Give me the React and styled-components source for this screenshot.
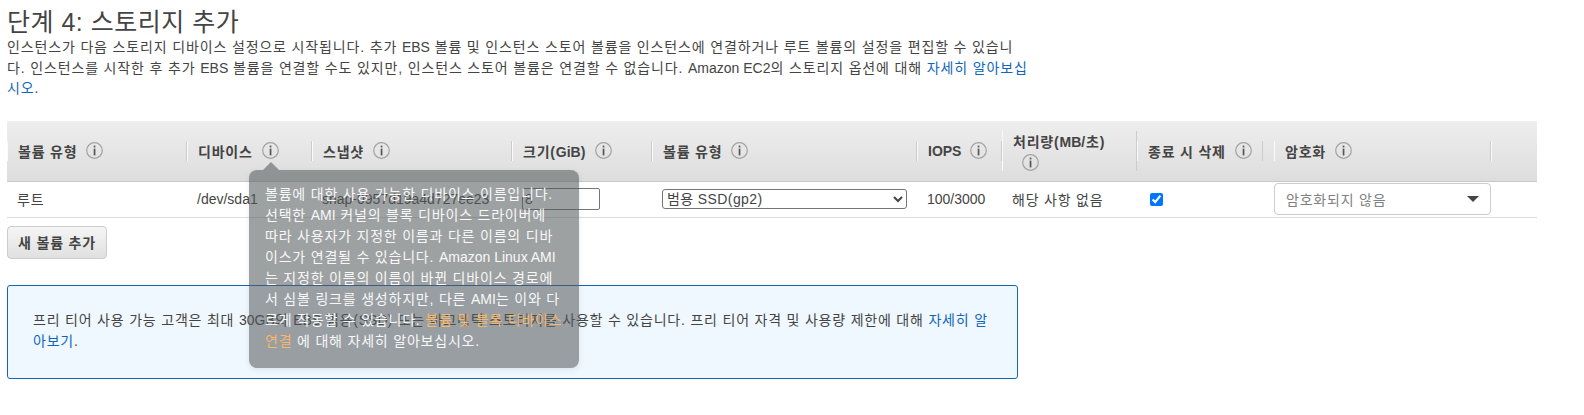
import React from "react";
import styled, { createGlobalStyle } from "styled-components";

const FONT = `"Liberation Sans", "Noto Sans CJK KR", sans-serif`;

const Global = createGlobalStyle`
  body {
    margin: 0;
    background: #fff;
    color: #444;
    font-family: ${FONT};
    font-size: 14px;
    letter-spacing: 0.8px;
  }
`;

const Page = styled.div`
  position: relative;
  width: 1584px;
  height: 415px;
  overflow: hidden;
  padding: 8px 0 0 7px;
  box-sizing: border-box;
`;

// latin runs keep their natural width, only the hangul is spaced out
const Lat = styled.span`
  letter-spacing: 0;
`;

const Title = styled.h1`
  margin: 0;
  font-size: 25px;
  font-weight: 400;
  line-height: 28px;
  letter-spacing: 0.5px;
  color: #444;
`;

const Intro = styled.p`
  margin: 1px 0 0;
  width: 1022px;
  line-height: 20.5px;
  letter-spacing: 0.85px;
  word-break: break-all;
`;

const Link = styled.a`
  color: #1166bb;
  text-decoration: none;
`;

const Table = styled.div`
  margin-top: 22px;
  width: 1530px;
`;

const COLUMNS = "180px 125px 200px 140px 265px 85px 135px 126px 228px 46px";

const HeadRow = styled.div`
  display: grid;
  grid-template-columns: ${COLUMNS};
  height: 61px;
  align-items: center;
  background: linear-gradient(#eee, #ddd);
  border-bottom: 1px solid #c8c8c8;
  box-sizing: border-box;
`;

const HeadCell = styled.div`
  display: flex;
  flex-direction: ${(p) => (p.$stack ? "column" : "row")};
  align-items: ${(p) => (p.$stack ? "flex-start" : "center")};
  gap: ${(p) => (p.$stack ? "3px" : "9px")};
  min-height: 20px;
  margin-left: ${(p) => (p.$inset ? "11px" : "0")};
  padding: 0 10px;
  font-weight: 700;
  color: #444;
  border-left: 1px solid #fafafa;
  border-right: ${(p) => (p.$plain ? "none" : "1px solid #ccc")};
  box-sizing: border-box;
  white-space: nowrap;
`;

const StackedIcon = styled.span`
  display: block;
  height: 17px;
  margin-left: 9px;
`;

const BodyRow = styled.div`
  display: grid;
  grid-template-columns: ${COLUMNS};
  height: 36px;
  align-items: center;
  border-bottom: 1px solid #ddd;
  box-sizing: border-box;
`;

const BodyCell = styled.div`
  padding-left: 10px;
  white-space: nowrap;
`;

const SizeInput = styled.input`
  display: block;
  width: 78px;
  height: 22px;
  padding: 0 2px;
  border: 1px solid #767676;
  border-radius: 2px;
  font: 14px ${FONT};
  color: #444;
  box-sizing: border-box;
`;

const TypeSelect = styled.select`
  display: block;
  width: 245px;
  height: 20px;
  border: 1px solid #767676;
  border-radius: 3px;
  background: #fff;
  font: 14px ${FONT};
  letter-spacing: 0.4px;
  color: #444;
`;

const DeleteCheck = styled.input`
  display: block;
  width: 13px;
  height: 13px;
  margin: 0 0 0 3px;
`;

const FakeSelect = styled.div`
  display: flex;
  align-items: center;
  justify-content: space-between;
  width: 217px;
  height: 32px;
  margin-left: 1px;
  padding: 0 11px;
  background: #fff;
  border: 1px solid #ccc;
  border-radius: 4px;
  color: #808080;
  box-sizing: border-box;
`;

const Caret = styled.span`
  width: 0;
  height: 0;
  border-left: 6px solid transparent;
  border-right: 6px solid transparent;
  border-top: 6px solid #444;
`;

const AddButton = styled.button`
  display: block;
  margin-top: 8px;
  width: 100px;
  height: 33px;
  padding: 0;
  background: linear-gradient(#f5f5f5, #e0e0e0);
  border: 1px solid #ccc;
  border-radius: 4px;
  font: 700 14px ${FONT};
  letter-spacing: 0.8px;
  color: #444;
`;

const Notice = styled.div`
  margin-top: 26px;
  width: 1011px;
  height: 94px;
  padding: 24px 25px;
  background: #f0f8ff;
  border: 1px solid #1166bb;
  border-radius: 3px;
  line-height: 21px;
  word-break: break-all;
  box-sizing: border-box;
`;

const Tip = styled.div`
  position: absolute;
  left: 249px;
  top: 170px;
  width: 330px;
  height: 198px;
  padding: 14px 16px;
  background: rgba(85, 90, 92, 0.57);
  border-radius: 8px;
  color: #f8f8f8;
  line-height: 21px;
  word-break: break-all;
  box-sizing: border-box;
  box-shadow: 0 2px 6px rgba(0, 0, 0, 0.08);

  &::before {
    content: "";
    position: absolute;
    left: 14px;
    top: -8px;
    border-left: 8px solid transparent;
    border-right: 8px solid transparent;
    border-bottom: 8px solid rgba(85, 90, 92, 0.57);
  }
`;

const TipLink = styled.a`
  color: #f6b76b;
  text-decoration: none;
`;

function InfoIcon() {
  return (
    <svg width="17" height="17" viewBox="0 0 17 17" style={{ flex: "none" }}>
      <circle cx="8.5" cy="8.5" r="7.8" fill="none" stroke="#a3a3a3" strokeWidth="1.2" />
      <rect x="7.7" y="3.6" width="1.7" height="1.8" fill="#555" />
      <rect x="7.7" y="6.6" width="1.7" height="6.8" fill="#555" />
    </svg>
  );
}

export default function App() {
  return (
    <Page>
      <Global />
      <Title>단계 4: 스토리지 추가</Title>
      <Intro>
        인스턴스가 다음 스토리지 디바이스 설정으로 시작됩니다. 추가 <Lat>EBS</Lat> 볼륨 및 인스턴스 스토어 볼륨을
        인스턴스에 연결하거나 루트 볼륨의 설정을 편집할 수 있습니다. 인스턴스를 시작한 후 추가 <Lat>EBS</Lat> 볼륨을
        연결할 수도 있지만, 인스턴스 스토어 볼륨은 연결할 수 없습니다. <Lat>Amazon EC2</Lat>의 스토리지 옵션에 대해{" "}
        <Link href="#">자세히 알아보십시오</Link>.
      </Intro>

      <Table>
        <HeadRow>
          <HeadCell>볼륨 유형<InfoIcon /></HeadCell>
          <HeadCell>디바이스<InfoIcon /></HeadCell>
          <HeadCell>스냅샷<InfoIcon /></HeadCell>
          <HeadCell>
            <span>크기(<Lat>GiB</Lat>)</span>
            <InfoIcon />
          </HeadCell>
          <HeadCell>볼륨 유형<InfoIcon /></HeadCell>
          <HeadCell><Lat>IOPS</Lat><InfoIcon /></HeadCell>
          <HeadCell $stack>
            <span>처리량(<Lat>MB</Lat>/초)</span>
            <StackedIcon><InfoIcon /></StackedIcon>
          </HeadCell>
          <HeadCell>종료 시 삭제<InfoIcon /></HeadCell>
          <HeadCell $inset>암호화<InfoIcon /></HeadCell>
          <HeadCell $plain />
        </HeadRow>
        <BodyRow>
          <BodyCell>루트</BodyCell>
          <BodyCell><Lat>/dev/sda1</Lat></BodyCell>
          <BodyCell><Lat>snap-0957d19a4d727ee23</Lat></BodyCell>
          <BodyCell>
            <SizeInput defaultValue="8" />
          </BodyCell>
          <BodyCell>
            <TypeSelect defaultValue="gp2">
              <option value="gp2">범용 SSD(gp2)</option>
            </TypeSelect>
          </BodyCell>
          <BodyCell><Lat>100/3000</Lat></BodyCell>
          <BodyCell>해당 사항 없음</BodyCell>
          <BodyCell>
            <DeleteCheck type="checkbox" defaultChecked />
          </BodyCell>
          <BodyCell>
            <FakeSelect>
              암호화되지 않음
              <Caret />
            </FakeSelect>
          </BodyCell>
          <BodyCell />
        </BodyRow>
      </Table>

      <AddButton>새 볼륨 추가</AddButton>

      <Notice>
        프리 티어 사용 가능 고객은 최대 <Lat>30GB</Lat>의 <Lat>EBS</Lat> 범용(<Lat>SSD</Lat>) 또는 마그네틱 스토리지를 사용할 수 있습니다. 프리
        티어 자격 및 사용량 제한에 대해 <Link href="#">자세히 알아보기</Link>.
      </Notice>

      <Tip>
        볼륨에 대한 사용 가능한 디바이스 이름입니다. 선택한 <Lat>AMI</Lat> 커널의 블록 디바이스 드라이버에 따라 사용자가
        지정한 이름과 다른 이름의 디바이스가 연결될 수 있습니다. <Lat>Amazon Linux AMI</Lat>는 지정한 이름의 이름이 바뀐
        디바이스 경로에서 심볼 링크를 생성하지만, 다른 <Lat>AMI</Lat>는 이와 다르게 작동할 수 있습니다.{" "}
        <TipLink href="#">볼륨 및 블록 디바이스 연결</TipLink> 에 대해 자세히 알아보십시오.
      </Tip>
    </Page>
  );
}
